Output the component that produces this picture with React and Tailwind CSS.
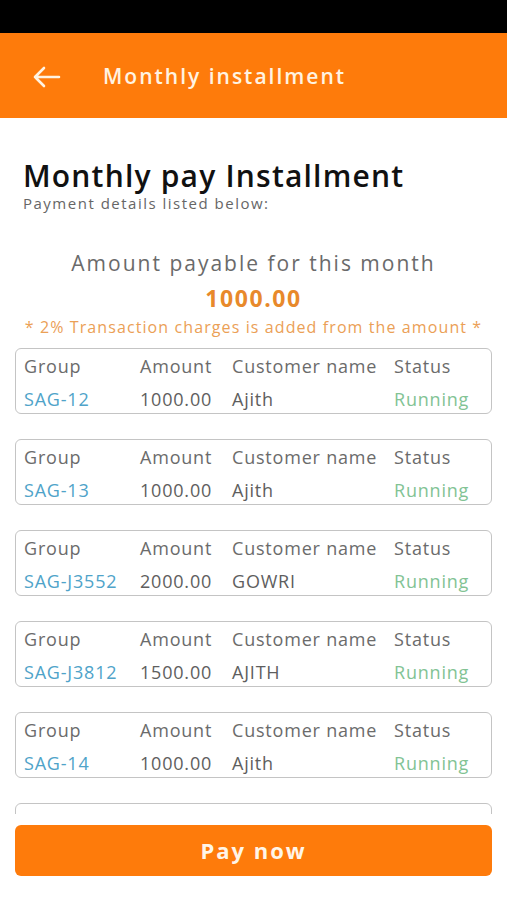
const rows = [
  { group: 'SAG-12', amount: '1000.00', name: 'Ajith', status: 'Running' },
  { group: 'SAG-13', amount: '1000.00', name: 'Ajith', status: 'Running' },
  { group: 'SAG-J3552', amount: '2000.00', name: 'GOWRI', status: 'Running' },
  { group: 'SAG-J3812', amount: '1500.00', name: 'AJITH', status: 'Running' },
  { group: 'SAG-14', amount: '1000.00', name: 'Ajith', status: 'Running' },
];

const InstallmentCard = ({ row }) => {
  return (
    <div className="border border-[#c4c4c4] rounded-[6px] pl-[8px] pt-[5px] pb-[2px] text-[18px] leading-[24px] tracking-[0.8px]">
      <div className="grid grid-cols-[116px_92px_162px_1fr] text-[#6b6b6b]">
        <span>Group</span>
        <span>Amount</span>
        <span>Customer name</span>
        <span>Status</span>
      </div>
      <div className="grid grid-cols-[116px_92px_162px_1fr] mt-[9px]">
        <span className="text-[#4fa3c9]">{row.group}</span>
        <span className="text-[#5e5e5e]">{row.amount}</span>
        <span className="text-[#5e5e5e]">{row.name}</span>
        <span className="text-[#82c394]">{row.status}</span>
      </div>
    </div>
  );
};

export default function App() {
  return (
    <div className="h-[900px] w-full flex flex-col bg-white overflow-hidden" style={{ fontFamily: '"Open Sans", sans-serif' }}>
      <div className="h-[33px] bg-black shrink-0" />
      <header className="h-[85px] bg-[#fe7b0b] flex items-center shrink-0">
        <svg className="ml-[33px] mt-[2px]" width="28" height="22" viewBox="0 0 28 22" fill="none" stroke="#fff3e2" strokeWidth="2.6" strokeLinecap="round" strokeLinejoin="round">
          <path d="M26 11H2M11 2L2 11l9 9" />
        </svg>
        <h1 className="ml-[42px] mt-[3px] text-[21px] font-semibold text-[#fff3e2] tracking-[2px]">Monthly installment</h1>
      </header>

      <main className="flex-1 overflow-hidden px-[15px]">
        <h2 className="mt-[43px] ml-[8px] text-[30px] leading-[30px] font-semibold text-[#111] tracking-[1.2px]">Monthly pay Installment</h2>
        <p className="mt-[3px] ml-[8px] text-[15px] leading-[18px] text-[#666] tracking-[1.5px]">Payment details listed below:</p>

        <div className="mt-[36px] text-center">
          <p className="text-[21px] leading-[30px] text-[#6a6a6a] tracking-[2px]">Amount payable for this month</p>
          <p className="mt-[5px] text-[23px] leading-[30px] font-bold text-[#e8892b] tracking-[1.6px]">1000.00</p>
          <p className="mt-[3px] text-[16px] leading-[22px] text-[#eba056] tracking-[1.1px]">* 2% Transaction charges is added from the amount *</p>
        </div>

        <div className="mt-[10px] flex flex-col gap-[25px]">
          {rows.map((row) => (
            <InstallmentCard key={row.group} row={row} />
          ))}
          <div className="border border-[#c4c4c4] rounded-[6px] h-[66px]" />
        </div>
      </main>

      <div className="shrink-0 px-[15px] pt-[11px] pb-[24px]">
        <button className="w-full h-[51px] bg-[#fe7b0b] rounded-[6px] text-[22px] font-bold text-[#fff5e8] tracking-[2px]">
          Pay now
        </button>
      </div>
    </div>
  );
}
